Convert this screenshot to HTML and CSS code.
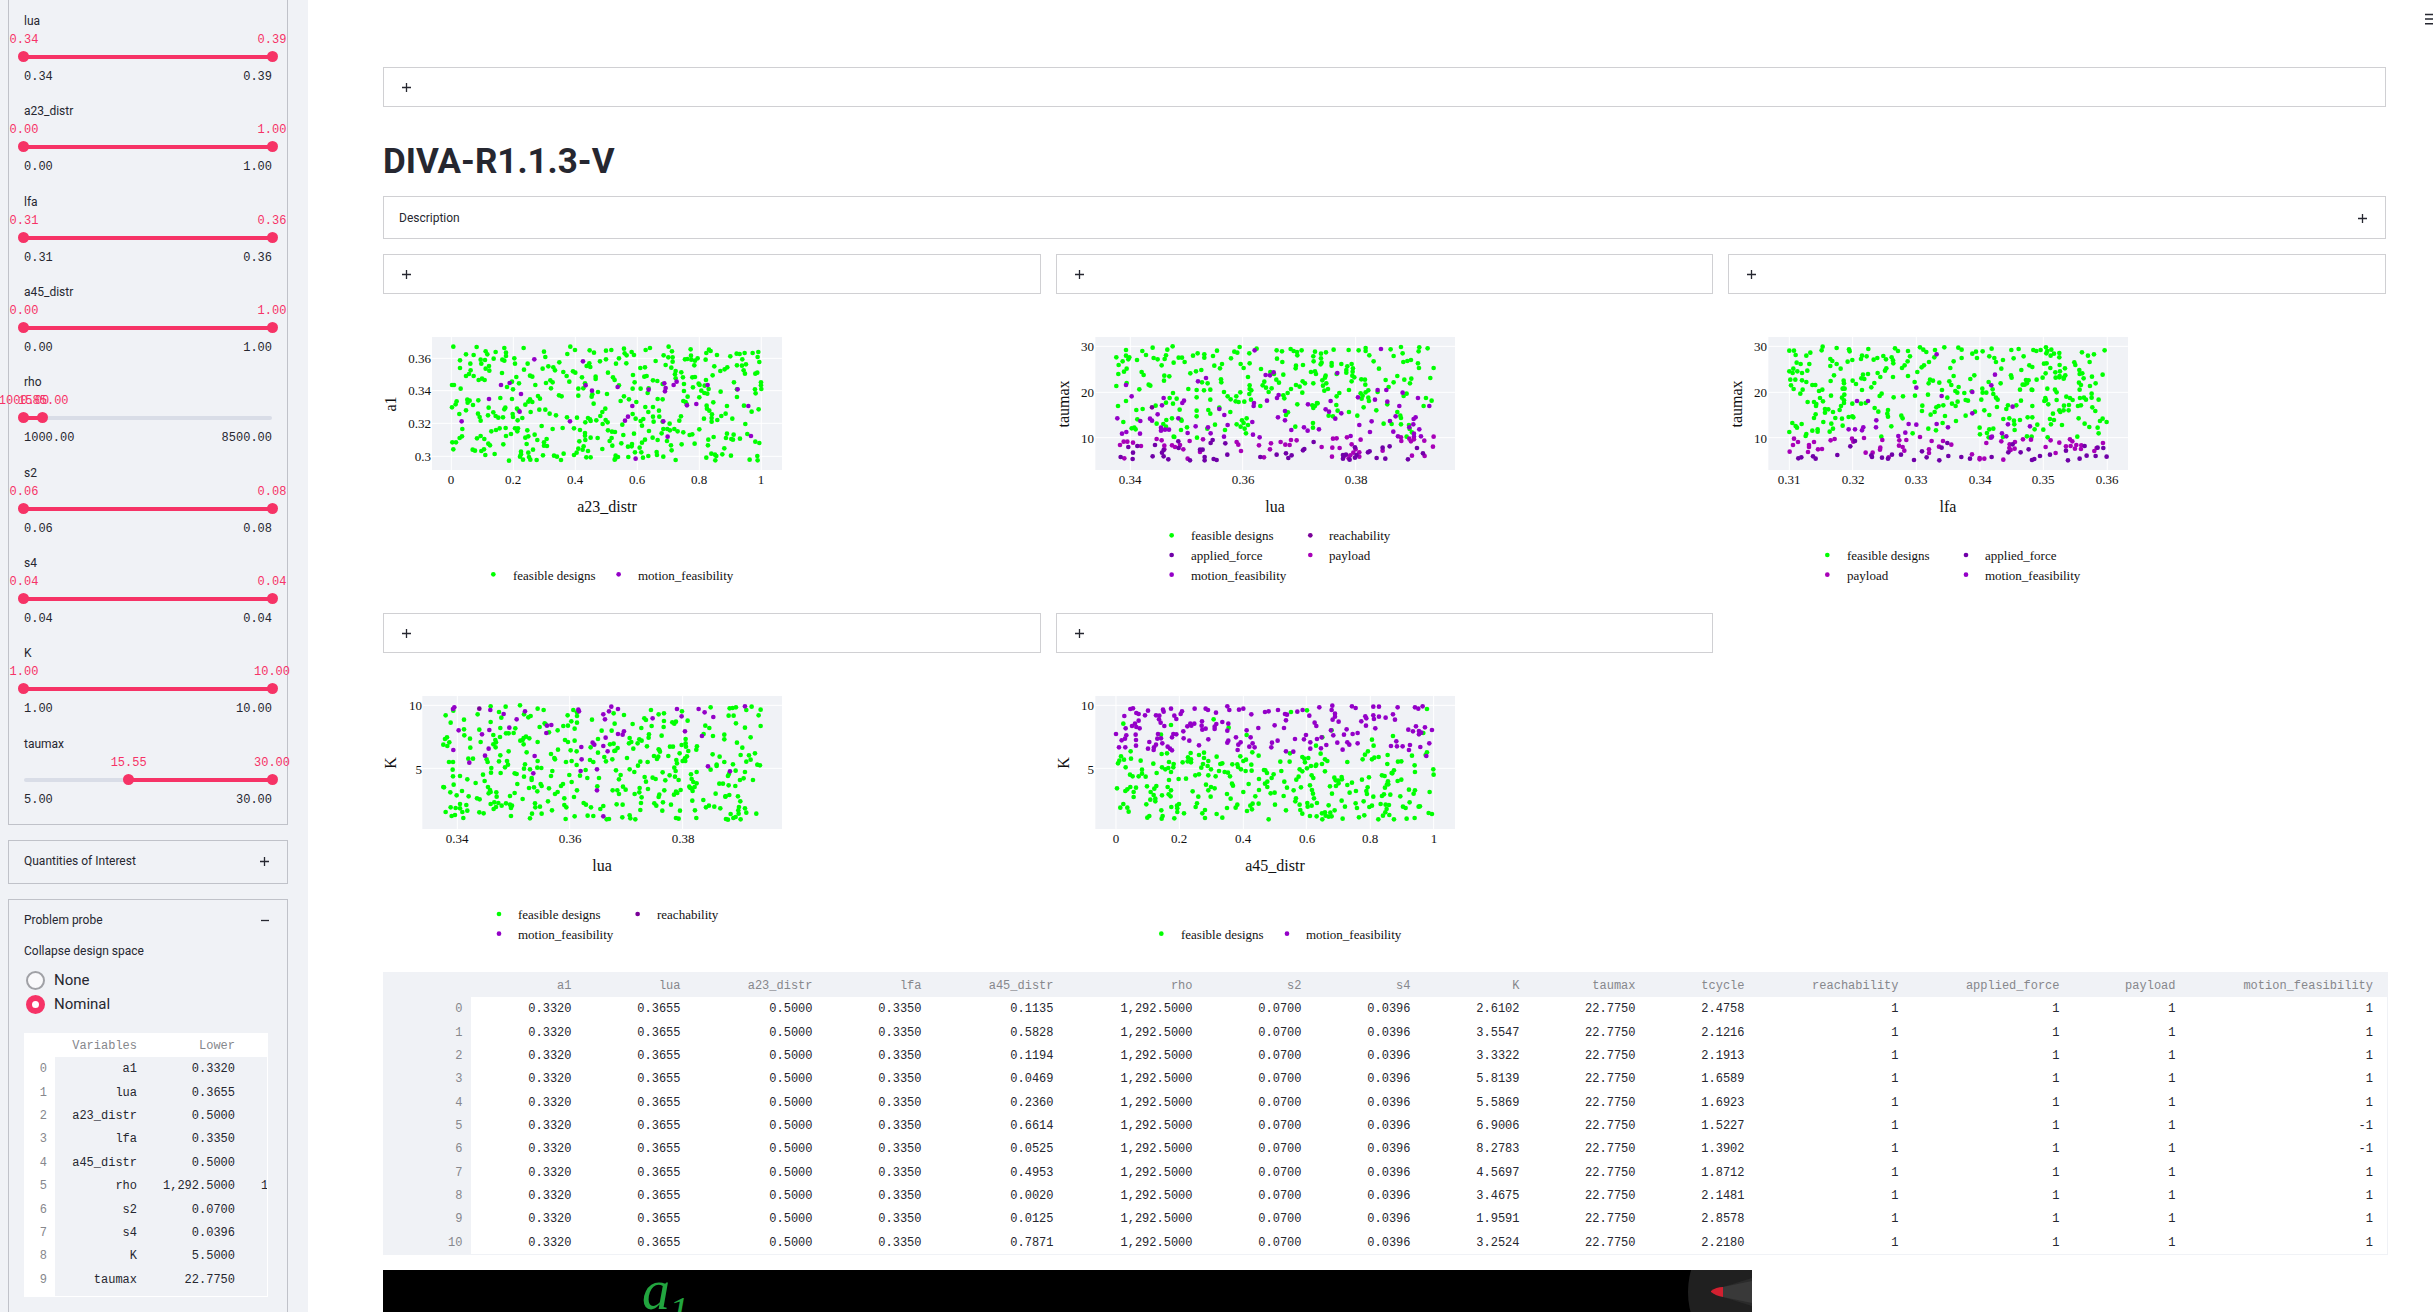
FILE: index.html
```html
<!DOCTYPE html>
<html lang="en">
<head>
<meta charset="utf-8">
<meta name="viewport" content="width=device-width, initial-scale=1">
<title>DIVA-R1.1.3-V</title>
<link rel="stylesheet" href="styles.css">
</head>
<body>
<svg class="defs" width="0" height="0" aria-hidden="true">
  <defs>
    <marker id="green" class="dot" markerUnits="userSpaceOnUse" markerWidth="14" markerHeight="14" refX="7" refY="7"><circle cx="7" cy="7" r="7" fill="#00ff00"/></marker>
    <marker id="motion" class="dot" markerUnits="userSpaceOnUse" markerWidth="14" markerHeight="14" refX="7" refY="7"><circle cx="7" cy="7" r="7" fill="#9400c8"/></marker>
    <marker id="force" class="dot" markerUnits="userSpaceOnUse" markerWidth="14" markerHeight="14" refX="7" refY="7"><circle cx="7" cy="7" r="7" fill="#7000a8"/></marker>
    <marker id="payload" class="dot" markerUnits="userSpaceOnUse" markerWidth="14" markerHeight="14" refX="7" refY="7"><circle cx="7" cy="7" r="7" fill="#a800b8"/></marker>
    <marker id="reach" class="dot" markerUnits="userSpaceOnUse" markerWidth="14" markerHeight="14" refX="7" refY="7"><circle cx="7" cy="7" r="7" fill="#7a0099"/></marker>
    <symbol id="plus" viewBox="0 0 9 9"><path d="M0 4.5h9M4.5 0v9" stroke="#262730" stroke-width="1.3"/></symbol>
    <symbol id="minus" viewBox="0 0 9 9"><path d="M1 4.5h8" stroke="#262730" stroke-width="1.3"/></symbol>
  </defs>
</svg>
<div class="app">
  <aside class="sidebar">
    <section class="panel sliders">
      <div class="slider" style="--lo:0;--hi:1"><label for="lua">lua</label><div class="values"><output class="lo">0.34</output><output class="hi">0.39</output></div><div class="track"><input id="lua" type="range" min="0" max="1" step="any" value="0"><input type="range" min="0" max="1" step="any" value="1" aria-label="lua upper"></div><div class="limits"><span>0.34</span><span>0.39</span></div></div>
      <div class="slider" style="--lo:0;--hi:1"><label for="a23">a23_distr</label><div class="values"><output class="lo">0.00</output><output class="hi">1.00</output></div><div class="track"><input id="a23" type="range" min="0" max="1" step="any" value="0"><input type="range" min="0" max="1" step="any" value="1" aria-label="a23_distr upper"></div><div class="limits"><span>0.00</span><span>1.00</span></div></div>
      <div class="slider" style="--lo:0;--hi:1"><label for="lfa">lfa</label><div class="values"><output class="lo">0.31</output><output class="hi">0.36</output></div><div class="track"><input id="lfa" type="range" min="0" max="1" step="any" value="0"><input type="range" min="0" max="1" step="any" value="1" aria-label="lfa upper"></div><div class="limits"><span>0.31</span><span>0.36</span></div></div>
      <div class="slider" style="--lo:0;--hi:1"><label for="a45">a45_distr</label><div class="values"><output class="lo">0.00</output><output class="hi">1.00</output></div><div class="track"><input id="a45" type="range" min="0" max="1" step="any" value="0"><input type="range" min="0" max="1" step="any" value="1" aria-label="a45_distr upper"></div><div class="limits"><span>0.00</span><span>1.00</span></div></div>
      <div class="slider" style="--lo:0;--hi:.078"><label for="rho">rho</label><div class="values"><output class="lo">1000.00</output><output class="hi">1585.00</output></div><div class="track"><input id="rho" type="range" min="0" max="1" step="any" value="0"><input type="range" min="0" max="1" step="any" value="0.078" aria-label="rho upper"></div><div class="limits"><span>1000.00</span><span>8500.00</span></div></div>
      <div class="slider" style="--lo:0;--hi:1"><label for="s2">s2</label><div class="values"><output class="lo">0.06</output><output class="hi">0.08</output></div><div class="track"><input id="s2" type="range" min="0" max="1" step="any" value="0"><input type="range" min="0" max="1" step="any" value="1" aria-label="s2 upper"></div><div class="limits"><span>0.06</span><span>0.08</span></div></div>
      <div class="slider" style="--lo:0;--hi:1"><label for="s4">s4</label><div class="values"><output class="lo">0.04</output><output class="hi">0.04</output></div><div class="track"><input id="s4" type="range" min="0" max="1" step="any" value="0"><input type="range" min="0" max="1" step="any" value="1" aria-label="s4 upper"></div><div class="limits"><span>0.04</span><span>0.04</span></div></div>
      <div class="slider" style="--lo:0;--hi:1"><label for="k">K</label><div class="values"><output class="lo">1.00</output><output class="hi">10.00</output></div><div class="track"><input id="k" type="range" min="0" max="1" step="any" value="0"><input type="range" min="0" max="1" step="any" value="1" aria-label="K upper"></div><div class="limits"><span>1.00</span><span>10.00</span></div></div>
      <div class="slider" style="--lo:.422;--hi:1"><label for="taumax">taumax</label><div class="values"><output class="lo">15.55</output><output class="hi">30.00</output></div><div class="track"><input id="taumax" type="range" min="0" max="1" step="any" value="0.422"><input type="range" min="0" max="1" step="any" value="1" aria-label="taumax upper"></div><div class="limits"><span>5.00</span><span>30.00</span></div></div>
    </section>

    <section class="panel"><button class="expander" type="button">Quantities of Interest<svg class="icon"><use href="#plus"/></svg></button></section>

    <section class="panel">
      <button class="expander" type="button">Problem probe<svg class="icon"><use href="#minus"/></svg></button>
      <div class="probe">
        <fieldset>
          <legend>Collapse design space</legend>
          <label class="choice"><input type="radio" name="collapse">None</label>
          <label class="choice"><input type="radio" name="collapse" checked>Nominal</label>
        </fieldset>
        <div class="clip">
          <table class="data mini">
            <colgroup><col class="idx"><col class="var"><col class="low"><col class="low"></colgroup>
            <thead><tr><th></th><th>Variables</th><th>Lower</th><th>Upper</th></tr></thead>
            <tbody>
              <tr><th>0</th><td>a1</td><td>0.3320</td><td>0.3320</td></tr>
              <tr><th>1</th><td>lua</td><td>0.3655</td><td>0.3655</td></tr>
              <tr><th>2</th><td>a23_distr</td><td>0.5000</td><td>0.5000</td></tr>
              <tr><th>3</th><td>lfa</td><td>0.3350</td><td>0.3350</td></tr>
              <tr><th>4</th><td>a45_distr</td><td>0.5000</td><td>0.5000</td></tr>
              <tr><th>5</th><td>rho</td><td>1,292.5000</td><td>1,292.5000</td></tr>
              <tr><th>6</th><td>s2</td><td>0.0700</td><td>0.0700</td></tr>
              <tr><th>7</th><td>s4</td><td>0.0396</td><td>0.0396</td></tr>
              <tr><th>8</th><td>K</td><td>5.5000</td><td>5.5000</td></tr>
              <tr><th>9</th><td>taumax</td><td>22.7750</td><td>22.7750</td></tr>
            </tbody>
          </table>
        </div>
      </div>
    </section>
  </aside>

  <main class="main">
    <header class="topbar"><button class="menu" type="button" aria-label="Menu"><svg width="8" height="12" viewBox="0 0 8 12"><path d="M0 1.5h8M0 6h8M0 10.8h8" stroke="#262730" stroke-width="1.6"/></svg></button></header>
    <div class="content">
      <section class="card"><button class="expander bare" type="button" aria-label="Expand"><svg class="icon"><use href="#plus"/></svg></button></section>
      <h1>DIVA-R1.1.3-V</h1>
      <section class="card"><button class="expander" type="button">Description<svg class="icon"><use href="#plus"/></svg></button></section>

      <div class="plots">
        <div class="plot">
          <section class="card"><button class="expander bare" type="button" aria-label="Expand"><svg class="icon"><use href="#plus"/></svg></button></section>
          <svg class="chart" width="427" height="289" viewBox="0 0 427 289">
            <g transform="translate(-13 11) scale(.3333)">
              <rect class="bg" x="186" y="51" width="1050" height="399"/>
              <path class="grid" d="M244 51v399M430 51v399M616 51v399M802 51v399M988 51v399M1174 51v399M186 115h1050M186 212h1050M186 310h1050M186 409h1050"/>
              <polyline class="pts green" points="250,80 320,81 403,84 461,84 601,80 762,86 840,84 896,80 962,88 1017,89 1165,96 288,103 311,105 347,94 352,103 377,96 408,98 408,108 522,95 526,111 592,102 615,90 659,91 672,98 708,92 724,90 827,90 906,94 764,100 770,106 785,96 792,105 1009,99 1022,93 1041,105 1081,109 1100,101 1109,102 1124,99 1148,99 270,121 371,116 397,119 403,122 433,115 332,119 345,120 435,131 473,131 568,127 690,124 708,118 747,115 738,131 769,130 857,123 881,106 895,112 908,112 908,125 887,135 945,118 952,117 964,119 975,122 983,115 963,107 1007,119 973,136 1033,139 1117,118 1128,133 1163,111 1168,126 270,144 301,131 334,131 357,138 358,152 347,146 462,149 518,146 535,139 550,142 555,151 580,156 650,138 661,141 658,130 811,144 825,142 904,143 917,153 934,157 1051,153 1064,148 1072,142 1101,136 1116,137 1121,151 1162,158 288,168 302,151 311,168 297,162 396,159 439,171 480,167 487,170 590,168 609,154 616,158 636,172 677,170 677,177 714,158 729,172 734,180 789,165 823,170 830,168 849,181 915,163 917,175 939,172 967,172 975,171 1028,166 1125,161 1156,161 326,180 336,176 344,180 426,185 447,190 528,189 541,181 548,187 598,185 645,190 747,196 794,187 862,183 878,192 942,192 986,191 989,195 1008,180 1092,187 1173,187 1173,196 246,195 252,195 272,206 411,201 429,208 496,195 543,205 625,206 640,205 684,216 711,222 788,206 812,206 833,219 836,205 942,213 969,202 1004,197 1016,207 994,212 1003,219 1012,221 1052,215 1101,208 1155,208 1174,207 1157,220 391,234 426,237 504,228 510,236 567,226 575,229 625,227 667,223 665,230 762,229 777,238 752,243 799,246 863,237 878,238 953,230 988,232 940,243 1030,247 1101,231 260,244 257,253 246,262 292,239 299,242 293,248 309,255 325,241 356,263 406,263 403,268 466,254 475,245 480,238 487,246 671,251 706,266 697,276 826,261 849,261 835,276 867,272 947,246 950,252 1010,257 1011,266 1018,272 1071,258 1122,257 1166,268 268,282 288,271 324,281 329,291 370,277 377,288 385,293 399,292 354,286 428,282 429,291 441,266 446,272 457,294 482,276 508,269 526,269 539,281 558,286 591,292 621,293 654,294 660,298 691,288 788,282 797,296 820,297 849,290 868,290 933,289 1002,296 1026,283 1025,294 1054,288 1067,281 1087,296 1145,275 332,302 443,301 646,307 662,303 679,301 707,300 713,307 698,312 757,314 816,317 812,303 851,305 878,305 899,311 928,302 1025,305 1042,300 1126,312 277,327 364,334 378,330 389,325 407,324 435,325 444,325 442,334 472,331 515,318 548,327 578,324 612,325 630,330 645,339 645,347 714,331 726,335 735,336 760,345 792,341 837,333 880,327 892,327 900,331 913,327 923,334 940,337 875,340 988,328 1132,342 269,354 276,349 321,355 332,348 343,357 408,348 423,342 466,353 475,349 494,344 502,360 530,357 662,353 683,354 725,354 719,363 825,359 848,353 863,360 891,363 959,345 967,343 1015,359 1031,351 1068,354 1071,341 1084,357 1091,344 1089,359 1110,356 1156,365 1168,369 247,367 258,367 355,371 360,376 400,373 470,372 522,367 522,377 531,378 628,364 646,360 727,377 754,370 786,372 785,379 774,380 809,383 816,368 903,376 905,391 935,373 974,371 1014,376 1063,385 250,388 308,389 315,392 334,393 342,388 453,395 489,389 625,386 641,379 638,389 654,393 697,387 860,396 795,397 814,397 1024,401 1035,404 1057,403 1083,407 1162,408 346,405 374,402 453,403 450,410 475,398 477,411 519,406 552,407 561,410 581,401 612,405 620,398 649,412 662,412 737,407 736,416 744,411 775,411 819,413 835,408 861,405 880,410 1009,413 1039,408 417,422 459,419 481,419 500,420 573,420 734,419 917,420 1036,421 1139,419 1163,421"/>
              <polyline class="pts motion" points="493,118 639,124 393,195 419,189 453,222 357,237 275,304 449,275 600,304 647,196 666,212 743,201 787,258 765,302 774,290 836,209 883,190 887,204 885,214 911,195 920,185 1013,195 1103,208 951,256 979,252 880,304 893,350 797,416 1135,258 1143,348"/>
              <polyline class="pts green" points="370,763"/><polyline class="pts motion" points="746,763"/>
            </g>
            <g class="tick end"><text x="48" y="54">0.36</text><text x="48" y="86">0.34</text><text x="48" y="119">0.32</text><text x="48" y="152">0.3</text></g>
            <g class="tick mid"><text x="68" y="175">0</text><text x="130" y="175">0.2</text><text x="192" y="175">0.4</text><text x="254" y="175">0.6</text><text x="316" y="175">0.8</text><text x="378" y="175">1</text></g>
            <g class="axis mid"><text x="224" y="203">a23_distr</text><text transform="translate(13 95) rotate(-90)">a1</text></g>
            <g class="tick"><text x="130" y="271">feasible designs</text><text x="255" y="271">motion_feasibility</text></g>
          </svg>
        </div>

        <div class="plot">
          <section class="card"><button class="expander bare" type="button" aria-label="Expand"><svg class="icon"><use href="#plus"/></svg></button></section>
          <svg class="chart" width="427" height="289" viewBox="0 0 427 289">
            <g transform="translate(-16 11) scale(.3333)">
              <rect class="bg" x="166" y="51" width="1079" height="399"/>
              <path class="grid" d="M271 51v399M608 51v399M947 51v399M166 79h1079M166 217h1079M166 353h1079"/>
              <polyline class="pts green" points="258,90 307,93 338,83 382,89 398,79 531,92 583,95 592,98 599,81 628,100 650,86 710,91 726,94 752,87 761,93 771,96 785,91 825,95 858,97 881,89 926,90 956,91 977,84 977,93 1052,88 1083,81 1088,100 1138,82 1136,94 1163,85 229,112 258,107 268,112 265,118 318,105 291,120 341,114 353,118 374,117 378,106 401,128 416,113 426,113 434,126 459,107 473,100 493,103 493,113 519,108 573,115 711,116 727,126 772,106 820,109 821,124 843,101 843,115 845,128 988,106 1001,124 1061,108 1090,126 1102,123 1113,120 1134,130 236,135 248,124 365,136 523,137 546,132 540,145 602,132 629,130 611,144 663,147 768,137 767,145 789,135 875,129 875,137 842,133 904,132 935,132 922,139 919,150 939,145 1017,146 1137,144 1181,144 260,146 252,155 235,162 305,156 311,165 373,167 388,169 372,182 451,160 468,154 484,150 624,171 691,156 702,162 730,164 813,156 825,154 828,162 857,167 855,173 919,158 938,155 937,167 943,172 890,162 1072,168 1114,176 1171,174 229,198 260,189 298,208 326,194 331,197 399,219 445,207 470,210 492,211 511,209 503,190 486,187 543,178 544,187 552,216 563,229 601,217 629,196 629,207 634,211 628,222 668,196 673,185 678,203 686,216 695,205 709,179 717,188 753,207 768,195 779,200 788,184 795,190 787,218 820,190 743,219 847,181 859,190 849,197 853,212 864,207 898,219 927,210 935,184 964,178 975,179 976,194 985,211 1013,216 1037,180 1046,201 1061,187 1110,190 1093,179 1100,221 1091,228 258,243 234,258 289,270 308,267 347,257 378,248 389,234 410,236 399,251 419,269 470,232 511,239 572,238 589,229 587,244 596,246 613,245 633,239 661,258 571,276 538,263 505,270 511,281 470,272 470,289 733,235 730,226 772,253 744,277 738,285 817,256 825,258 831,249 820,264 833,250 890,229 889,255 893,272 879,289 866,287 927,276 952,287 962,220 977,217 968,227 965,236 985,233 987,243 971,262 1009,271 1042,253 1072,276 1081,287 1083,294 1151,258 1158,234 1175,242 250,306 292,298 370,312 379,300 396,295 423,299 425,302 350,311 283,323 287,328 275,325 378,320 423,330 441,322 525,314 555,330 590,313 606,301 620,295 611,309 624,315 602,320 614,326 618,340 403,351 471,353 401,350 502,326 766,320 819,309 819,323 1031,311 1055,312 1083,313 1107,315 1109,327 1100,350 1116,337"/>
              <polyline class="pts motion" points="644,91 1023,87 892,159 677,165 690,166 701,157 498,174 474,184 258,195 275,229 371,234 366,256 432,242 427,249 538,267 642,249 641,258 681,242 711,234 716,225 804,253 735,273 872,243 857,268 867,275 904,280 886,296 954,232 1013,210 1039,210 1005,239 1042,245 1088,218 1134,234 1168,258 1078,258 232,295 353,283 330,296 336,302 301,303 415,295 553,285 563,315 714,292 735,301 637,306 504,322 467,319 363,323 363,332 375,329 387,329 259,336 246,341 300,341 512,340 443,339 639,344 754,330 792,322 803,332 837,328 995,304 958,315 1067,289 1050,303 1121,297 1127,292 1120,313 1060,335 1074,349 1108,322 1138,328 1122,341 1122,350 1143,349 552,350 659,352 932,348 990,336"/>
              <polyline class="pts payload" points="240,375 251,365 262,365 279,368 303,378 350,357 365,361 373,377 373,388 396,376 405,381 420,375 430,388 449,363 489,358 480,396 590,366 595,374 603,393 657,376 693,370 690,388 722,366 736,374 749,375 753,360 770,361 845,381 879,356 890,355 877,383 876,410 899,384 921,352 935,373 962,359 947,388 958,410 958,397 931,406 912,409 926,415 940,398 1084,363 1083,352 1113,364 1122,358 1116,407 1153,362 1154,408 1179,380 1181,350 1108,356 253,415 443,416 672,412 1028,392"/>
              <polyline class="pts force" points="265,381 292,378 279,398 278,417 242,411 345,375 371,390 366,398 371,409 385,418 338,409 415,364 416,384 450,421 480,389 488,389 494,411 494,421 518,360 512,369 521,417 530,420 556,370 562,404 661,411 710,404 738,400 745,414 755,406 793,387 789,391 821,366 909,405 918,404 909,416 929,419 945,382 950,405 945,413 984,397 989,394 1010,414 1036,416 1028,383 1049,379 1131,384 1149,400 1104,418"/>
              <polyline class="pts reach" points="336,262"/>
              <polyline class="pts green" points="395,646"/><polyline class="pts force" points="395,705"/><polyline class="pts motion" points="395,764"/><polyline class="pts reach" points="811,646"/><polyline class="pts payload" points="811,705"/>
            </g>
            <g class="tick end"><text x="38" y="42">30</text><text x="38" y="88">20</text><text x="38" y="134">10</text></g>
            <g class="tick mid"><text x="74" y="175">0.34</text><text x="187" y="175">0.36</text><text x="300" y="175">0.38</text></g>
            <g class="axis mid"><text x="219" y="203">lua</text><text transform="translate(13 95) rotate(-90)">taumax</text></g>
            <g class="tick"><text x="135" y="231">feasible designs</text><text x="135" y="251">applied_force</text><text x="135" y="271">motion_feasibility</text><text x="273" y="231">reachability</text><text x="273" y="251">payload</text></g>
          </svg>
        </div>

        <div class="plot">
          <section class="card"><button class="expander bare" type="button" aria-label="Expand"><svg class="icon"><use href="#plus"/></svg></button></section>
          <svg class="chart" width="427" height="289" viewBox="0 0 427 289">
            <g transform="translate(-18 11) scale(.3333)">
              <rect class="bg" x="175" y="51" width="1079" height="399"/>
              <path class="grid" d="M238 51v399M428 51v399M619 51v399M810 51v399M1000 51v399M1192 51v399M175 79h1079M175 217h1079M175 353h1079"/>
              <polyline class="pts green" points="238,92 252,92 257,105 301,98 289,107 338,80 335,91 380,84 417,88 419,94 475,87 555,85 564,93 594,93 630,82 640,89 649,96 675,90 703,82 745,83 755,89 787,101 798,95 818,94 845,86 904,90 926,87 970,90 979,93 992,90 1008,82 1012,93 1024,89 1032,101 1048,99 1116,97 1134,107 1152,103 1184,91 456,107 470,109 453,117 491,119 502,114 520,108 528,118 545,112 549,121 600,109 593,124 657,126 673,112 755,114 801,114 838,109 853,114 858,126 879,120 911,115 941,109 1009,100 1022,107 1048,112 260,128 272,132 298,132 361,117 367,123 361,138 380,132 392,146 413,125 427,120 550,130 584,136 576,144 529,145 525,152 642,136 635,142 622,156 731,124 721,144 874,146 934,150 958,136 967,141 1002,131 1010,130 1021,144 1049,135 1065,145 1093,127 1096,135 1108,150 1139,126 238,154 250,146 248,159 262,154 276,159 292,152 372,166 459,164 474,162 503,159 511,171 549,171 594,168 731,168 793,166 781,177 903,166 905,173 1007,160 998,173 1036,157 1050,154 1049,168 1037,173 1062,173 1066,166 1109,162 1117,160 1146,170 1178,164 241,179 256,179 276,181 289,186 243,196 251,207 278,209 271,221 307,195 316,195 327,213 337,209 362,183 401,182 402,190 398,206 404,206 403,224 428,182 438,192 454,175 463,177 456,210 484,202 493,189 509,228 515,221 551,232 579,229 614,186 615,227 660,179 669,182 656,190 688,188 696,210 718,184 724,195 746,201 736,213 742,218 712,233 767,240 774,242 763,219 785,214 817,206 818,218 829,218 836,186 848,208 850,222 872,190 930,209 938,194 948,180 944,194 951,190 956,181 965,209 980,179 1012,206 1035,209 1040,217 1048,172 1061,176 1107,188 1113,195 1109,209 1121,175 1140,198 1157,190 1145,221 1145,233 293,246 312,246 319,252 330,234 339,244 318,258 363,227 396,233 402,241 402,249 393,258 389,270 427,251 427,289 401,206 453,251 467,249 494,264 505,275 534,270 532,281 534,290 574,287 578,295 637,257 636,273 662,284 674,276 679,262 686,258 700,256 705,288 654,224 726,251 737,258 743,245 738,303 767,287 795,275 823,271 838,285 814,239 858,233 863,239 861,261 889,267 894,256 933,242 919,256 967,258 967,210 1006,234 1008,240 1003,243 1015,253 1040,240 1069,230 1080,234 1088,240 1077,255 1076,271 1061,271 1048,271 1051,276 1062,257 1029,281 1104,258 1113,256 1110,234 1122,233 1128,239 1147,262 1156,273 1166,239 345,267 345,278 355,268 369,276 317,283 312,294 340,306 364,311 376,294 396,296 416,291 430,292 247,309 275,312 257,318 261,323 238,336 289,342 287,348 307,332 323,328 323,335 359,335 369,326 398,317 544,319 514,350 608,340 655,326 678,331 698,309 809,323 810,343 838,328 831,339 850,326 836,352 879,351 880,297 898,295 912,302 913,313 914,330 930,300 953,292 967,292 982,314 974,328 1000,329 1020,297 1032,300 1023,313 1056,315 1106,295 1124,311 1138,321 1163,323 1166,340 1170,303 1178,296 1190,306 951,349 965,350 1013,352 1102,350"/>
              <polyline class="pts motion" points="680,103 855,164 844,196 787,216 619,203 695,228 441,243 474,243 787,280 908,260 499,301 498,322 596,312 619,314 586,338 565,348 680,312 714,322 894,313 960,319 876,340 416,328 435,328 460,322 456,331 846,350 843,353 889,349"/>
              <polyline class="pts payload" points="252,356 264,366 249,375 239,395 312,366 297,375 297,381 294,396 324,388 336,387 362,361 374,357 426,356 462,354 430,365 467,398 488,398 511,383 510,389 517,360 568,361 567,377 578,381 583,392 589,360 630,351 665,363 657,388 657,399 699,363 687,380 724,374 829,369 786,403 809,414 823,416 809,418 880,419 874,364 915,366 899,373 898,384 914,386 902,390 939,358 963,359 1007,381 1022,361 1037,399 1048,368 1080,358 1087,364 1068,379 1082,378 1099,375 1095,386 1114,376 1113,387 1160,384 1153,393 1179,369 536,412"/>
              <polyline class="pts force" points="265,415 274,412 309,409 317,416 382,405 421,379 435,363 484,406 486,411 516,413 534,416 546,404 573,404 612,420 636,394 650,412 688,421 695,383 712,369 715,408 754,411 780,416 845,411 895,397 908,373 932,397 956,388 966,420 973,417 990,408 1020,404 1068,392 1074,421 1124,378 1109,416 1130,407 1157,408 1163,383 1180,384 1190,410"/>
              <polyline class="pts green" points="352,705"/><polyline class="pts payload" points="352,764"/><polyline class="pts force" points="768,705"/><polyline class="pts motion" points="768,764"/>
            </g>
            <g class="tick end"><text x="39" y="42">30</text><text x="39" y="88">20</text><text x="39" y="134">10</text></g>
            <g class="tick mid"><text x="61" y="175">0.31</text><text x="125" y="175">0.32</text><text x="188" y="175">0.33</text><text x="252" y="175">0.34</text><text x="315" y="175">0.35</text><text x="379" y="175">0.36</text></g>
            <g class="axis mid"><text x="220" y="203">lfa</text><text transform="translate(14 95) rotate(-90)">taumax</text></g>
            <g class="tick"><text x="119" y="251">feasible designs</text><text x="119" y="271">payload</text><text x="257" y="251">applied_force</text><text x="257" y="271">motion_feasibility</text></g>
          </svg>
        </div>

        <div class="plot">
          <section class="card"><button class="expander bare" type="button" aria-label="Expand"><svg class="icon"><use href="#plus"/></svg></button></section>
          <svg class="chart" width="427" height="289" viewBox="0 0 427 289">
            <g transform="translate(-13 12) scale(.3333)">
              <rect class="bg" x="157" y="48" width="1079" height="399"/>
              <path class="grid" d="M262 48v399M599 48v399M938 48v399M157 76h1079M157 265h1079"/>
              <polyline class="pts green" points="362,79 407,80 450,76 503,86 521,90 610,90 843,90 1022,82 1079,85 1088,84 1098,82 1145,80 1129,90 1172,89 227,106 250,92 323,103 387,96 394,113 462,103 475,112 482,108 621,97 593,106 621,108 621,128 604,124 666,119 731,100 762,105 866,103 882,100 936,94 1076,107 1091,107 1166,106 242,128 282,119 362,126 391,144 509,141 527,133 537,157 563,151 580,138 594,137 614,146 524,130 734,131 788,132 823,115 828,120 845,138 814,144 882,123 881,141 907,127 918,125 913,131 953,122 1006,137 1018,144 1098,130 1125,143 1172,138 282,148 283,166 328,149 370,165 408,160 431,159 416,160 436,145 695,152 725,152 837,163 836,173 875,167 779,174 1001,162 1029,168 1063,164 1063,178 1142,172 231,172 238,187 220,194 232,198 225,177 300,176 301,203 332,186 376,180 390,171 370,193 377,202 378,187 451,182 461,174 468,170 478,175 458,180 461,193 503,186 585,180 594,186 614,182 684,177 731,191 720,193 743,204 784,186 790,206 777,190 815,182 808,178 803,190 831,199 866,208 870,215 900,200 909,200 935,195 947,177 947,190 948,200 955,213 981,199 979,209 1101,188 1117,203 470,217 416,214 391,226 411,243 414,254 405,262 387,244 309,236 295,236 249,246 237,246 248,269 350,238 353,246 364,264 363,278 339,284 270,288 249,289 392,279 434,280 440,282 462,266 465,253 480,268 462,290 485,294 485,300 502,263 514,264 503,243 543,222 564,209 553,234 547,273 543,288 555,238 602,211 620,214 588,246 605,243 620,255 598,285 630,287 605,306 647,270 660,240 670,246 662,202 684,218 703,231 708,244 736,212 727,238 733,213 771,234 738,271 747,298 752,285 779,268 793,276 811,245 804,257 833,246 852,228 861,237 865,230 895,228 868,210 929,220 919,240 921,250 938,243 945,235 951,229 946,243 913,263 917,273 915,290 926,300 899,286 878,277 857,297 848,293 824,291 828,305 963,283 965,297 980,276 1028,223 1049,230 1040,254 1040,258 1063,246 1089,253 1022,269 1097,272 1074,288 1077,282 1125,276 1112,225 1137,226 1142,239 1155,220 1129,245 1162,254 1170,256 1110,300 1121,295 1149,300 292,298 251,314 317,309 344,303 222,322 241,337 276,333 260,346 296,349 220,321 354,321 360,330 362,336 356,340 379,337 380,350 420,348 434,339 442,312 477,324 492,322 512,312 515,318 502,334 537,325 555,342 563,336 579,312 573,318 621,331 612,351 583,355 652,294 687,294 682,319 728,331 742,331 747,342 759,320 767,329 809,324 794,342 808,337 834,327 815,352 868,344 866,351 883,331 886,301 932,330 918,335 912,344 922,339 958,320 966,326 968,333 980,310 970,306 974,321 961,324 1048,311 1059,311 1076,316 1096,318 1037,341 1067,349 1078,345 1104,349 270,372 289,375 242,382 257,384 270,385 227,396 277,396 292,392 321,355 329,358 362,372 373,367 385,369 371,387 378,381 395,377 408,370 420,374 426,377 423,384 458,357 495,370 496,382 510,380 534,364 546,391 515,401 583,375 589,382 641,369 648,374 663,382 691,387 700,378 740,373 758,374 813,369 811,390 853,370 859,377 879,367 877,392 903,374 930,392 967,362 975,391 1000,360 1008,382 1017,377 1033,380 1051,385 1066,350 1111,364 1107,381 1125,385 1105,391 1106,401 1129,398 1159,401 1082,402 328,397 341,400 255,405 245,408 280,414 423,408 486,401 480,415 587,417 614,409 653,407 670,408 710,418 717,417 757,412 779,406 781,415 796,418 918,414 926,416 979,414 1068,417 1074,419 1090,414 1112,418 1097,411"/>
              <polyline class="pts motion" points="249,87 253,82 361,90 401,102 440,118 465,94 266,151 336,163 358,150 418,143 250,210 356,206 345,227 298,248 531,137 544,135 529,159 494,228 490,280 625,89 627,94 700,103 724,80 717,94 744,87 705,118 848,115 921,87 935,109 986,87 1004,97 1030,111 1125,79 945,154 996,168 744,162 758,164 762,154 707,173 668,188 673,194 700,198 634,201 713,214 635,238 632,273 681,268 681,331 700,409 1014,259 1080,274"/>
              <polyline class="pts reach" points="328,86"/>
              <polyline class="pts green" points="387,702"/><polyline class="pts motion" points="387,761"/><polyline class="pts reach" points="803,702"/>
            </g>
            <g class="tick end"><text x="39" y="42">10</text><text x="39" y="106">5</text></g>
            <g class="tick mid"><text x="74" y="175">0.34</text><text x="187" y="175">0.36</text><text x="300" y="175">0.38</text></g>
            <g class="axis mid"><text x="219" y="203">lua</text><text transform="translate(13 95) rotate(-90)">K</text></g>
            <g class="tick"><text x="135" y="251">feasible designs</text><text x="135" y="271">motion_feasibility</text><text x="274" y="251">reachability</text></g>
          </svg>
        </div>

        <div class="plot">
          <section class="card"><button class="expander bare" type="button" aria-label="Expand"><svg class="icon"><use href="#plus"/></svg></button></section>
          <svg class="chart" width="427" height="289" viewBox="0 0 427 289">
            <g transform="translate(-16 12) scale(.3333)">
              <rect class="bg" x="166" y="48" width="1079" height="399"/>
              <path class="grid" d="M228 48v399M418 48v399M610 48v399M799 48v399M991 48v399M1181 48v399M166 76h1079M166 265h1079"/>
              <polyline class="pts green" points="250,131 393,135 521,118 363,164 566,143 620,165 753,96 801,91 875,151 847,172 996,179 1001,197 1059,168 1150,159 1161,87 828,197 272,214 243,229 252,239 238,242 273,236 302,242 340,251 234,250 257,262 306,269 270,284 278,289 296,289 306,281 317,290 350,279 366,262 376,268 385,264 365,222 381,220 387,246 401,252 400,262 393,276 387,300 428,247 416,297 438,296 444,232 452,219 453,238 443,244 453,247 477,225 492,218 492,234 489,252 505,243 484,263 503,258 513,268 466,286 477,283 505,286 527,289 537,273 530,230 547,250 541,252 554,276 564,278 570,289 577,253 592,253 594,261 603,268 601,229 610,243 618,239 617,273 637,217 656,227 634,254 635,272 657,297 672,270 676,271 681,279 701,283 695,294 721,245 724,273 750,220 749,245 787,231 793,236 805,234 795,247 779,268 787,274 801,265 813,258 827,258 829,254 815,286 820,294 776,290 769,299 842,221 855,238 862,243 855,274 846,252 883,293 895,302 887,301 905,291 906,298 922,246 966,299 968,238 975,224 984,214 996,238 1003,233 1016,231 987,292 1043,225 1042,252 1074,245 1084,244 1062,271 1057,280 1026,286 1034,288 1055,279 1044,304 1041,313 1073,303 1084,299 1116,227 1125,276 1124,256 1161,217 1157,225 1180,268 1181,284 231,325 256,333 262,328 271,321 288,323 281,336 281,351 321,319 349,318 332,336 343,326 341,345 331,359 346,364 346,356 383,321 393,331 386,343 392,349 366,346 458,334 475,350 498,314 513,321 524,325 505,331 512,350 561,342 572,356 576,311 579,317 610,336 626,312 646,349 657,330 675,311 682,321 682,305 692,340 704,338 731,348 733,305 741,323 761,331 783,322 810,316 816,330 819,341 822,355 768,355 766,364 870,319 888,318 896,310 876,341 922,315 936,308 929,338 905,362 948,333 983,322 979,333 981,342 1000,350 971,364 1035,323 1045,313 1026,348 1032,343 1051,344 1081,349 1107,329 1125,331 1121,341 1169,336 250,372 241,383 262,383 266,395 319,373 364,391 411,377 417,372 412,385 412,396 432,400 394,381 471,370 467,381 495,390 487,400 530,402 561,384 592,374 587,383 621,393 638,371 631,377 636,388 656,371 705,374 738,391 779,374 781,390 802,369 803,380 815,377 831,369 787,401 866,376 915,380 951,384 947,370 988,381 996,377 1022,372 1037,374 1036,397 1040,387 1047,375 1089,380 1097,384 1109,367 1136,380 1140,379 1176,402 1166,399 328,408 322,413 368,408 365,416 403,415 495,414 547,413 686,418 810,408 830,409 847,418 855,397 846,400 871,398 884,391 857,407 866,410 875,409 908,416 957,412 973,406 1029,407 1048,405 1015,418 1062,418 1100,416 1124,414"/>
              <polyline class="pts motion" points="271,87 279,85 324,92 253,108 289,99 296,102 315,106 369,89 371,95 393,86 403,107 409,117 426,94 422,102 464,86 497,86 504,90 528,98 562,79 568,90 597,89 610,86 634,103 675,96 686,94 714,90 735,102 741,104 772,95 788,90 808,107 838,82 877,77 875,90 885,101 885,110 878,119 896,125 936,79 947,84 1000,80 1017,80 1073,82 1125,82 1135,86 1148,79 1059,103 1065,119 1037,113 1017,110 1000,106 1002,117 976,109 979,115 964,124 978,137 1006,145 348,106 358,107 357,118 362,128 373,138 296,122 285,131 276,138 289,141 299,145 257,145 228,162 259,166 255,176 245,181 237,202 256,202 287,164 288,180 288,197 328,186 324,206 342,202 341,210 348,194 354,162 352,176 363,175 367,190 383,200 390,206 396,211 400,162 409,163 396,172 430,154 431,175 448,182 442,139 451,131 463,131 454,137 486,124 485,137 487,149 497,146 505,178 477,196 529,132 524,140 524,147 547,126 565,131 562,152 565,182 562,188 588,172 602,187 595,194 593,210 620,151 632,172 638,190 628,200 644,202 655,144 704,136 732,144 738,121 694,202 696,188 713,182 765,177 792,178 798,165 738,214 760,215 824,128 829,138 811,187 811,206 831,177 845,172 859,195 843,205 873,151 880,166 892,188 912,164 920,148 922,187 928,194 908,209 938,162 953,159 953,190 1053,198 1069,184 1071,199 1088,199 1110,195 1107,210 1105,149 1119,154 1128,139 1137,153 1137,163 1144,158 1155,142 1176,150 1168,190 1141,201 1159,228"/>
              <polyline class="pts green" points="364,761"/><polyline class="pts motion" points="741,761"/>
            </g>
            <g class="tick end"><text x="38" y="42">10</text><text x="38" y="106">5</text></g>
            <g class="tick mid"><text x="60" y="175">0</text><text x="123" y="175">0.2</text><text x="187" y="175">0.4</text><text x="251" y="175">0.6</text><text x="314" y="175">0.8</text><text x="378" y="175">1</text></g>
            <g class="axis mid"><text x="219" y="203">a45_distr</text><text transform="translate(13 95) rotate(-90)">K</text></g>
            <g class="tick"><text x="125" y="271">feasible designs</text><text x="250" y="271">motion_feasibility</text></g>
          </svg>
        </div>
      </div>

      <table class="data results">
        <colgroup><col class="first"><col class="num"><col class="num"><col class="wide"><col class="num"><col class="wide"><col class="rho"><col class="num"><col class="num"><col class="num"><col class="tau"><col class="num"><col class="reachability"><col class="applied"><col class="tau"><col class="feasibility"></colgroup>
        <thead><tr><th></th><th>a1</th><th>lua</th><th>a23_distr</th><th>lfa</th><th>a45_distr</th><th>rho</th><th>s2</th><th>s4</th><th>K</th><th>taumax</th><th>tcycle</th><th>reachability</th><th>applied_force</th><th>payload</th><th>motion_feasibility</th></tr></thead>
        <tbody>
          <tr><th>0</th><td>0.3320</td><td>0.3655</td><td>0.5000</td><td>0.3350</td><td>0.1135</td><td>1,292.5000</td><td>0.0700</td><td>0.0396</td><td>2.6102</td><td>22.7750</td><td>2.4758</td><td>1</td><td>1</td><td>1</td><td>1</td></tr>
          <tr><th>1</th><td>0.3320</td><td>0.3655</td><td>0.5000</td><td>0.3350</td><td>0.5828</td><td>1,292.5000</td><td>0.0700</td><td>0.0396</td><td>3.5547</td><td>22.7750</td><td>2.1216</td><td>1</td><td>1</td><td>1</td><td>1</td></tr>
          <tr><th>2</th><td>0.3320</td><td>0.3655</td><td>0.5000</td><td>0.3350</td><td>0.1194</td><td>1,292.5000</td><td>0.0700</td><td>0.0396</td><td>3.3322</td><td>22.7750</td><td>2.1913</td><td>1</td><td>1</td><td>1</td><td>1</td></tr>
          <tr><th>3</th><td>0.3320</td><td>0.3655</td><td>0.5000</td><td>0.3350</td><td>0.0469</td><td>1,292.5000</td><td>0.0700</td><td>0.0396</td><td>5.8139</td><td>22.7750</td><td>1.6589</td><td>1</td><td>1</td><td>1</td><td>1</td></tr>
          <tr><th>4</th><td>0.3320</td><td>0.3655</td><td>0.5000</td><td>0.3350</td><td>0.2360</td><td>1,292.5000</td><td>0.0700</td><td>0.0396</td><td>5.5869</td><td>22.7750</td><td>1.6923</td><td>1</td><td>1</td><td>1</td><td>1</td></tr>
          <tr><th>5</th><td>0.3320</td><td>0.3655</td><td>0.5000</td><td>0.3350</td><td>0.6614</td><td>1,292.5000</td><td>0.0700</td><td>0.0396</td><td>6.9006</td><td>22.7750</td><td>1.5227</td><td>1</td><td>1</td><td>1</td><td>-1</td></tr>
          <tr><th>6</th><td>0.3320</td><td>0.3655</td><td>0.5000</td><td>0.3350</td><td>0.0525</td><td>1,292.5000</td><td>0.0700</td><td>0.0396</td><td>8.2783</td><td>22.7750</td><td>1.3902</td><td>1</td><td>1</td><td>1</td><td>-1</td></tr>
          <tr><th>7</th><td>0.3320</td><td>0.3655</td><td>0.5000</td><td>0.3350</td><td>0.4953</td><td>1,292.5000</td><td>0.0700</td><td>0.0396</td><td>4.5697</td><td>22.7750</td><td>1.8712</td><td>1</td><td>1</td><td>1</td><td>1</td></tr>
          <tr><th>8</th><td>0.3320</td><td>0.3655</td><td>0.5000</td><td>0.3350</td><td>0.0020</td><td>1,292.5000</td><td>0.0700</td><td>0.0396</td><td>3.4675</td><td>22.7750</td><td>2.1481</td><td>1</td><td>1</td><td>1</td><td>1</td></tr>
          <tr><th>9</th><td>0.3320</td><td>0.3655</td><td>0.5000</td><td>0.3350</td><td>0.0125</td><td>1,292.5000</td><td>0.0700</td><td>0.0396</td><td>1.9591</td><td>22.7750</td><td>2.8578</td><td>1</td><td>1</td><td>1</td><td>1</td></tr>
          <tr><th>10</th><td>0.3320</td><td>0.3655</td><td>0.5000</td><td>0.3350</td><td>0.7871</td><td>1,292.5000</td><td>0.0700</td><td>0.0396</td><td>3.2524</td><td>22.7750</td><td>2.2180</td><td>1</td><td>1</td><td>1</td><td>1</td></tr>
        </tbody>
      </table>

      <svg class="video" viewBox="0 0 1369 770" role="img" aria-label="Whiteboard video">
        <rect width="1369" height="770" fill="#000"/>
        <text class="ink" x="259" y="39">a</text><text class="ink sub" x="286" y="54">1</text>
        <circle cx="1385" cy="22" r="80" fill="#202020"/>
        <path d="M1340 17L1369 8V36L1340 27z" fill="#2b2b2b"/>
        <path d="M1340 17L1369 11V33L1340 27z" fill="#393939"/>
        <path d="M1328 21q5-4 12-4v10q-7-1-12-5z" fill="#d22030"/>
      </svg>
    </div>
  </main>
</div>
</body>
</html>
```
FILE: styles.css
```css
* { box-sizing: border-box; }

body {
  margin: 0;
  height: 100vh;
  overflow: hidden;
  background: #fff;
  color: #262730;
  font: 12px/18px Roboto, "Liberation Sans", sans-serif;
}

.defs { position: absolute; }
.dot { overflow: visible; }

.app { display: flex; height: 100%; }

.sidebar {
  flex: 0 0 308px;
  height: 100%;
  overflow: hidden;
  display: flex;
  flex-direction: column;
  gap: 15px;
  padding: 0 20px 0 8px;
  background: #f0f2f6;
}

.main { flex: 1; min-width: 0; height: 100%; overflow: hidden; }

/* Panels and expanders */
.panel { flex: none; border: 1px solid #c0c2c9; }
.card { border: 1px solid #d0d0d3; }

.expander {
  display: flex;
  width: 100%;
  align-items: center;
  justify-content: space-between;
  padding: 11px 18px 13px 15px;
  border: 0;
  background: none;
  color: inherit;
  font: inherit;
  line-height: 18px;
  text-align: left;
}
.card .expander { padding-top: 12px; padding-bottom: 11px; }
.card .expander.bare { padding: 10px 18px; min-height: 38px; }
.icon { width: 9px; height: 9px; }

/* Range sliders */
.sliders {
  display: grid;
  grid-auto-rows: 1fr;
  min-height: 825px;
  padding: 11px 15px 0;
  border-top: 0;
}
.slider { display: flex; flex-direction: column; }
.slider label { line-height: 20px; }
.values {
  position: relative;
  height: 18px;
  font-family: "Liberation Mono", monospace;
  color: #f63366;
}
.values output { position: absolute; transform: translateX(-50%); }
.values .lo { left: calc(var(--lo) * 100%); }
.values .hi { left: calc(var(--hi) * 100%); }
.track {
  position: relative;
  height: 4px;
  margin: 6px 0 9px;
  border-radius: 2px;
  background: linear-gradient(to right, #d9dde7 calc(var(--lo) * 100%), #f63366 calc(var(--lo) * 100%), #f63366 calc(var(--hi) * 100%), #d9dde7 calc(var(--hi) * 100%));
}
.track input {
  position: absolute;
  left: -6px;
  top: -4px;
  width: calc(100% + 12px);
  height: 11px;
  margin: 0;
  appearance: none;
  background: none;
  pointer-events: none;
}
.track input::-webkit-slider-thumb {
  appearance: none;
  width: 11px;
  height: 11px;
  border-radius: 50%;
  background: #f63366;
  pointer-events: auto;
}
.limits {
  display: flex;
  justify-content: space-between;
  font-family: "Liberation Mono", monospace;
}

/* Problem probe */
.probe { padding: 0 19px 15px 15px; }
fieldset { margin: 0 0 17px; padding: 0; border: 0; }
legend { padding: 0; margin-bottom: 8px; }
.choice {
  display: flex;
  align-items: center;
  gap: 9px;
  height: 24px;
  margin-left: 2px;
  font-size: 15px;
}
.choice input {
  appearance: none;
  width: 19px;
  height: 19px;
  margin: 0;
  border: 2px solid #a0a1a6;
  border-radius: 50%;
  background: #f9f9fb;
}
.choice input:checked { border: 6px solid #f63366; background: #fff; }
.clip { overflow: hidden; border: solid #fff; border-width: 0 1px 1px 0; }

/* Data tables */
.data {
  table-layout: fixed;
  border-collapse: collapse;
  font-family: "Liberation Mono", monospace;
  line-height: 18px;
}
.data th, .data td { padding: 3px 8px 2px 0; text-align: right; white-space: nowrap; }
.data th { color: #86878c; font-weight: 400; }
.data thead th { padding-top: 4px; }
.mini { width: 316px; height: 263px; }
.mini th { background: #fff; }
.mini tbody tr:last-child > * { padding-bottom: 7px; }
.mini .idx { width: 31px; }
.mini .var { width: 90px; }
.mini .low { width: 98px; }

.results { width: 100%; height: 283px; border: 1px solid #f0f2f6; }
.results th { background: #f0f2f6; }
.results th:last-child, .results td:last-child { padding-right: 14px; }
.results .first { width: 87px; }
.results .num { width: 109px; }
.results .wide { width: 132px; }
.results .rho { width: 139px; }
.results .tau { width: 116px; }
.results .reachability { width: 154px; }
.results .applied { width: 161px; }
.results .feasibility { width: 204px; }

/* Main column */
.topbar { display: flex; justify-content: flex-end; height: 67px; padding-top: 13px; }
.menu { display: flex; height: 12px; padding: 0; border: 0; background: none; }
.content { display: flex; flex-direction: column; gap: 15px; padding: 0 47px 0 75px; }
h1 { margin: 21px 0 0; font-size: 35px; line-height: 38px; font-weight: 700; }
.plots { display: grid; grid-template-columns: repeat(3, 1fr); gap: 15px; }
.plot { display: flex; flex-direction: column; gap: 15px; min-width: 0; }

.chart { display: block; font-family: "Liberation Serif", serif; fill: #111; }
.bg { fill: #f0f2f6; }
.grid { stroke: #fff; stroke-width: 3; }
.pts { fill: none; stroke: none; }
.green { marker: url(#green); }
.motion { marker: url(#motion); }
.force { marker: url(#force); }
.payload { marker: url(#payload); }
.reach { marker: url(#reach); }
.tick { font-size: 13px; }
.axis { font-size: 16px; }
.mid { text-anchor: middle; }
.end { text-anchor: end; }

.video { display: block; flex: none; width: 1369px; max-width: 100%; }
.ink { font: italic 56px "Liberation Serif", serif; fill: #22a53f; }
.ink.sub { font-size: 40px; }
```
